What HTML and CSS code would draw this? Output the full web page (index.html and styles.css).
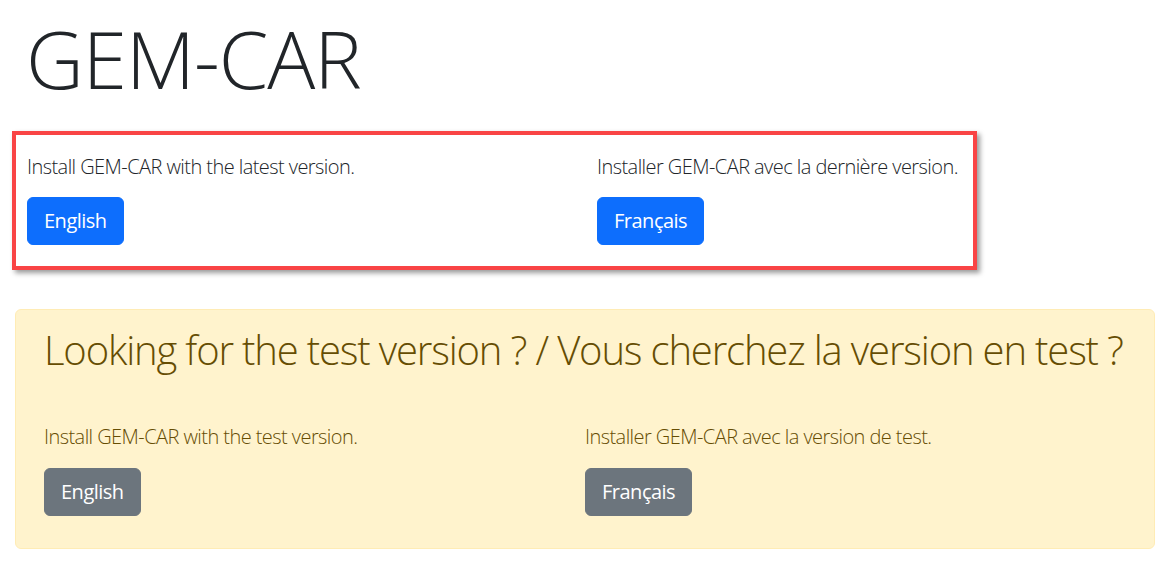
FILE: index.html
```html
<!DOCTYPE html>
<html lang="en">
<head>
  <meta charset="UTF-8">
  <meta name="viewport" content="width=device-width, initial-scale=1.0">
  <title>GEM-CAR</title>
  <link rel="stylesheet" href="styles.css">
</head>
<body>
  <div class="page">
    <h1 class="title">GEM-CAR</h1>

    <div class="highlight">
      <div class="row row-main">
        <div class="col">
          <p class="lead">Install GEM-CAR with the latest version.</p>
          <a class="btn btn-primary" href="#">English</a>
        </div>
        <div class="col">
          <p class="lead">Installer GEM-CAR avec la dernière version.</p>
          <a class="btn btn-primary" href="#">Français</a>
        </div>
      </div>
    </div>

    <div class="alert">
      <h2 class="alert-heading">Looking for the test version ? / Vous cherchez la version en test ?</h2>
      <div class="row row-test">
        <div class="col">
          <p class="lead">Install GEM-CAR with the test version.</p>
          <a class="btn btn-secondary" href="#">English</a>
        </div>
        <div class="col">
          <p class="lead">Installer GEM-CAR avec la version de test.</p>
          <a class="btn btn-secondary" href="#">Français</a>
        </div>
      </div>
    </div>
  </div>
</body>
</html>
```
FILE: styles.css
```css
:root {
  --text-color: #212529;
  --primary-color: #0d6efd;
  --secondary-color: #6c757d;
  --warning-bg: #fff3cd;
  --warning-border: #ffecb5;
  --warning-text: #664d03;
  --annotation: #f94445;
}

html, body {
  margin: 0;
  padding: 0;
  background: #ffffff;
  color: var(--text-color);
  font-family: "Open Sans", "Noto Sans", sans-serif;
  font-size: 16px;
  line-height: 1.5;
}

.page {
  padding: 10px 0 0 12px;
}

.title {
  margin: 0 0 25px 14px;
  font-size: 80px;
  font-weight: 300;
  line-height: 96px;
  letter-spacing: -0.013em;
}

/* red frame around the stable downloads */
.highlight {
  width: 965px;
  box-sizing: border-box;
  border: 4px solid var(--annotation);
  padding: 16px 0 21px 11px;
  box-shadow: 3px 3px 5px rgba(0, 0, 0, 0.4);
  margin-bottom: 39px;
}

.row {
  display: grid;
}

.row-main {
  grid-template-columns: 570px auto;
}

.row-test {
  grid-template-columns: 541px auto;
}

.lead {
  margin: 0 0 16px;
  font-size: 20px;
  font-weight: 300;
  line-height: 30px;
  letter-spacing: -0.028em;
}

.row-main .lead {
  padding-top: 1px;
  margin-bottom: 15px;
}

.btn {
  display: inline-block;
  height: 48px;
  box-sizing: border-box;
  padding: 8px 16px;
  border: 1px solid transparent;
  border-radius: 6px;
  color: #ffffff;
  font-size: 20px;
  font-weight: 400;
  line-height: 30px;
  letter-spacing: -0.025em;
  text-decoration: none;
}

.btn-primary {
  background-color: var(--primary-color);
  border-color: var(--primary-color);
}

.btn-secondary {
  background-color: var(--secondary-color);
  border-color: var(--secondary-color);
}

.alert {
  margin-left: 3px;
  width: 1140px;
  box-sizing: border-box;
  padding: 16px 16px 32px 28px;
  background-color: var(--warning-bg);
  border: 1px solid var(--warning-border);
  border-radius: 6px;
  color: var(--warning-text);
}

.alert-heading {
  margin: 0 0 48px;
  font-size: 40px;
  font-weight: 300;
  line-height: 48px;
  letter-spacing: -0.029em;
}
```
